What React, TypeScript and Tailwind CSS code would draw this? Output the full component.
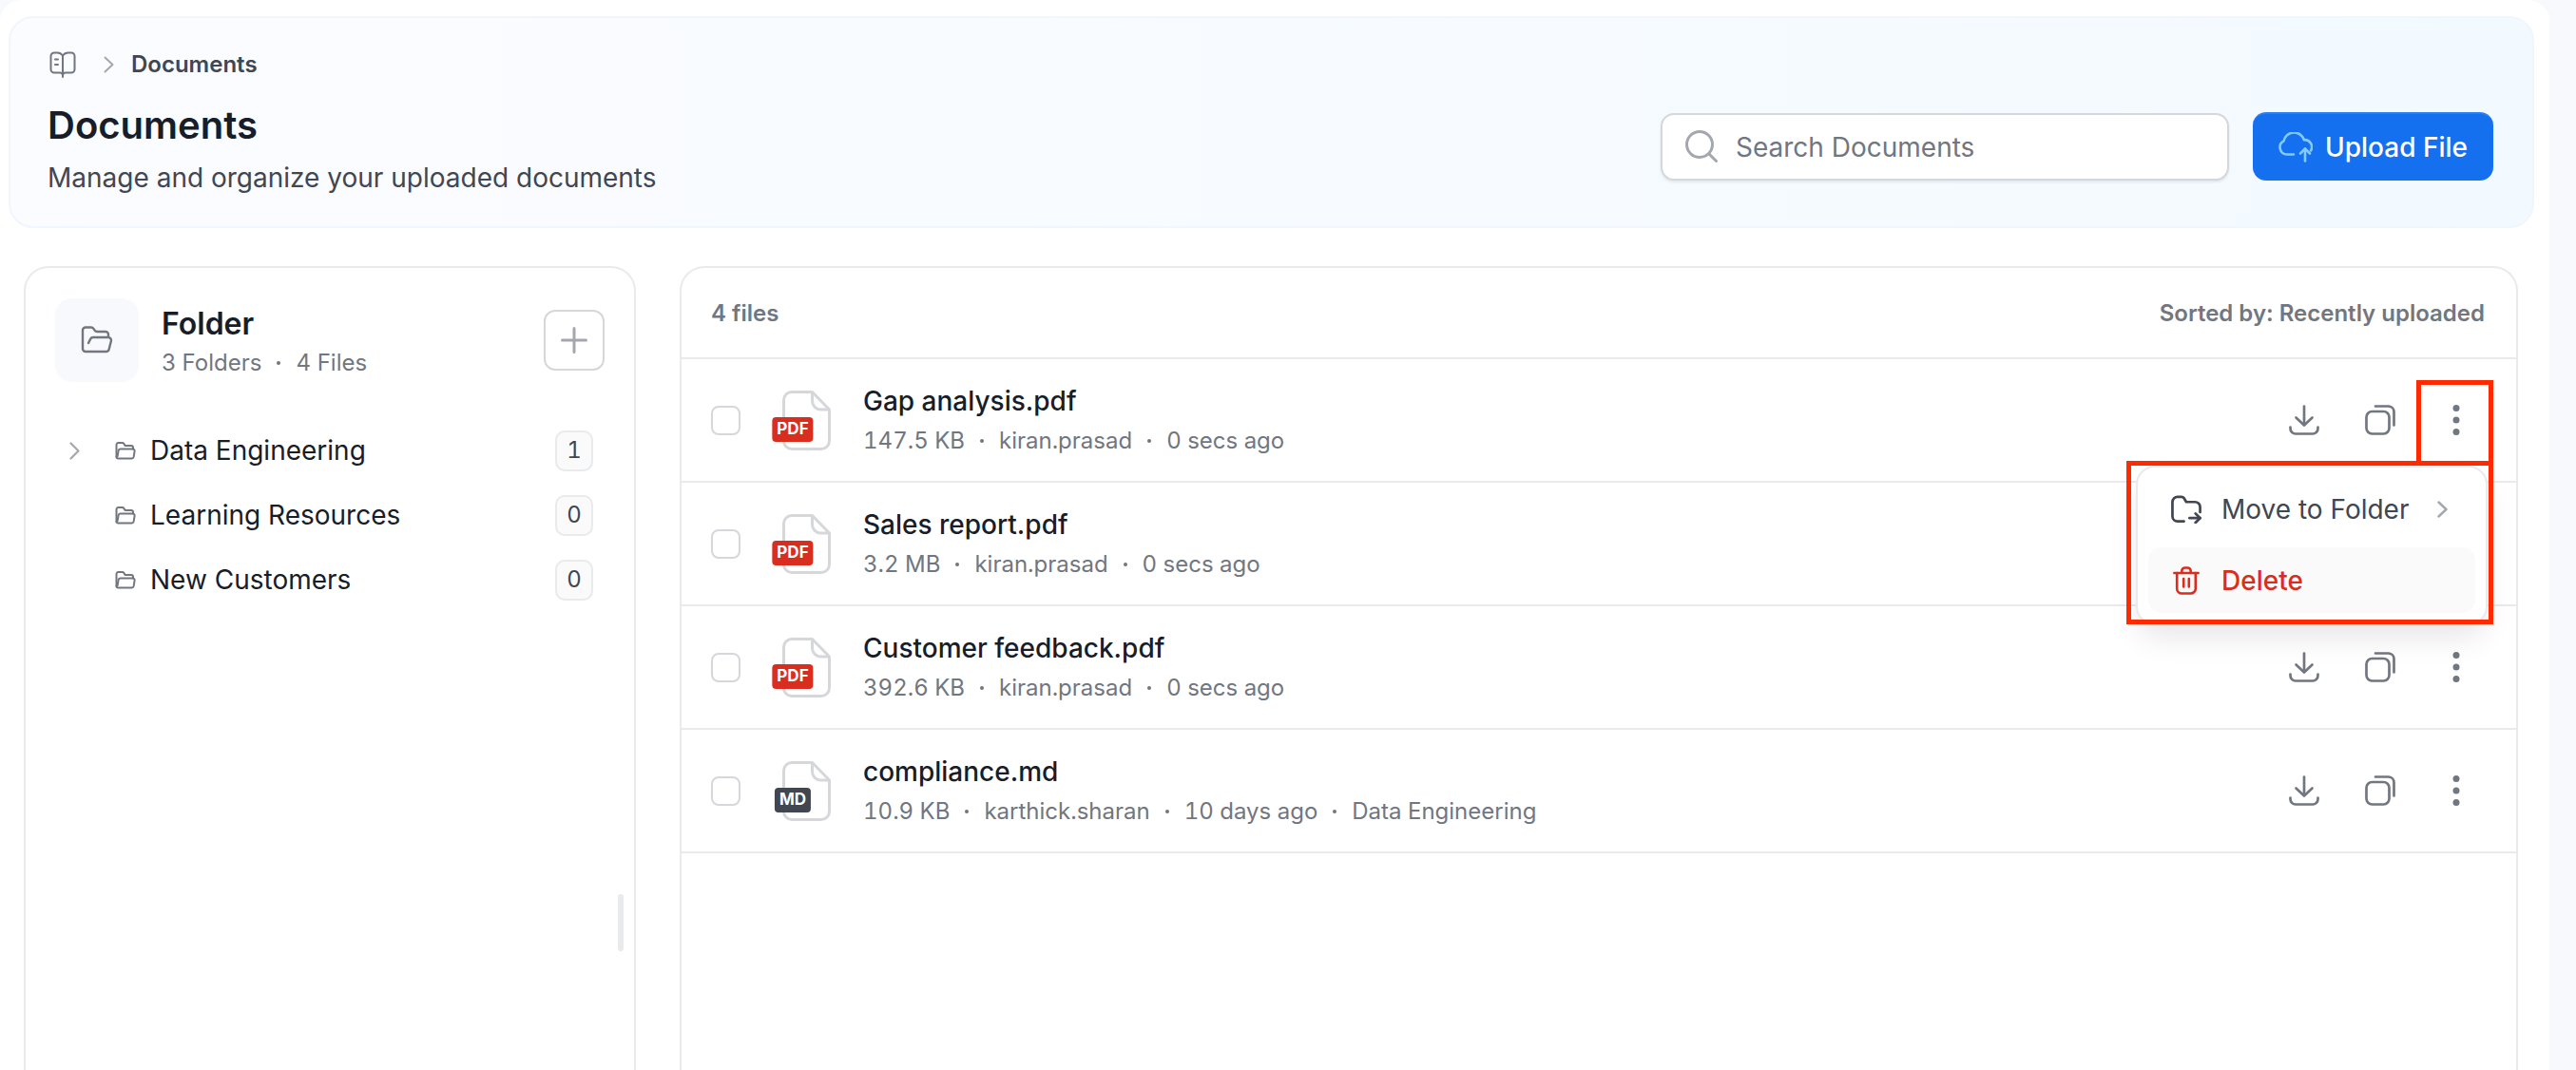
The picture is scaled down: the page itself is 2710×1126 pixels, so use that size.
import React from "react";

const Dot = () => <span className="w-[4px] h-[4px] rounded-full bg-[#717680] mx-[16px] shrink-0" />;

function FolderSmall({ cls }: { cls: string }) {
  return (
    <svg className={cls} viewBox="0 0 24 24" fill="none" stroke="currentColor" strokeWidth="2" strokeLinecap="round" strokeLinejoin="round">
      <path d="M2.500 19V6a2 2 0 0 1 2-2h4.200a2 2 0 0 1 1.600.800L11.600 7H18a2 2 0 0 1 2 2v1.500" />
      <path d="M2.500 19a1.800 1.800 0 0 0 1.800 1.500H18.600a2 2 0 0 0 2-1.600l1-6a2 2 0 0 0-2-2.400H6.600a2 2 0 0 0-2 1.700L3.600 18" />
    </svg>
  );
}

function FileIcon({ label, bg }: { label: string; bg: string }) {
  return (
    <div className="relative w-[61px] h-[63px] shrink-0 flex justify-end">
      <svg className="w-[51px] h-[63px]" viewBox="0 0 51 63" fill="none" stroke="#d5d7da" strokeWidth="3" strokeLinejoin="round">
        <path d="M10 1.500H31.500L49.500 20V53a8.500 8.500 0 0 1-8.500 8.500H10A8.500 8.500 0 0 1 1.500 53V10A8.500 8.500 0 0 1 10 1.500Z" />
        <path d="M31.500 1.500V11a9 9 0 0 0 9 9H49.500" />
      </svg>
      <span className={`absolute top-[28px] left-[21px] -translate-x-1/2 h-[26px] rounded-[4px] px-[5px] flex items-center text-white text-[17px] font-bold leading-none ${bg}`}>
        {label}
      </span>
    </div>
  );
}

function Row({ name, meta, label, bg }: { name: string; meta: string[]; label: string; bg: string }) {
  return (
    <div className="h-[130px] flex items-center pl-[31px] pr-[23px] border-b-2 border-[#e9eaeb]">
      <div className="w-[31px] h-[31px] rounded-[8px] border-2 border-[#d5d7da] bg-white shrink-0" />
      <div className="ml-[34px]">
        <FileIcon label={label} bg={bg} />
      </div>
      <div className="ml-[34px] mt-[2px] flex flex-col">
        <div className="text-[28px] leading-[41px] font-medium text-[#181d27]">{name}</div>
        <div className="flex items-center text-[24px] leading-[41px] text-[#717680] tabular-nums">
          {meta.map((m, i) => (
            <React.Fragment key={m}>
              {i > 0 && <Dot />}
              <span>{m}</span>
            </React.Fragment>
          ))}
        </div>
      </div>
      <div className="ml-auto flex items-center text-[#717680]">
        <button className="w-[80px] flex justify-center">
          <svg className="w-[32px] h-[32px]" viewBox="0 0 32 32" fill="none" stroke="currentColor" strokeWidth="2.700" strokeLinecap="round" strokeLinejoin="round">
            <path d="M16 1.500V21" />
            <path d="M7.500 13.500 16 21.500l8.500-8" />
            <path d="M1.500 23.500V25a5.500 5.500 0 0 0 5.500 5.500h18a5.500 5.500 0 0 0 5.500-5.500v-1.500" />
          </svg>
        </button>
        <button className="w-[80px] flex justify-center">
          <svg className="w-[32px] h-[32px]" viewBox="0 0 32 32" fill="none" stroke="currentColor" strokeWidth="2.700" strokeLinecap="round" strokeLinejoin="round">
            <rect x="1.500" y="7" width="24" height="23.500" rx="6" />
            <path d="M11 1.500h14a6 6 0 0 1 5.500 6V21.500" />
          </svg>
        </button>
        <button className="w-[80px] flex justify-center">
          <svg className="w-[8px] h-[32px]" viewBox="0 0 8 32" fill="currentColor">
            <circle cx="4" cy="3.500" r="3.500" />
            <circle cx="4" cy="16" r="3.500" />
            <circle cx="4" cy="28.500" r="3.500" />
          </svg>
        </button>
      </div>
    </div>
  );
}

function FolderRow({ name, count, chevron }: { name: string; count: number; chevron?: boolean }) {
  return (
    <div className="h-[68px] flex items-center">
      <div className="w-[62px] pl-[15px] shrink-0 flex items-center">
        {chevron && (
          <svg className="w-[11px] h-[19px] text-[#a4a7ae]" viewBox="0 0 11 19" fill="none" stroke="currentColor" strokeWidth="2.200" strokeLinecap="round" strokeLinejoin="round">
            <path d="M1.500 1.500 9.500 9.500l-8 8" />
          </svg>
        )}
      </div>
      <FolderSmall cls="w-[24px] h-[24px] text-[#717680] shrink-0" />
      <span className="ml-[14px] text-[28px] text-[#181d27]">{name}</span>
      <span className="ml-auto mr-[12px] w-[40px] h-[43px] rounded-[10px] border-2 border-[#e9eaeb] bg-[#fafafa] flex items-center justify-center text-[24px] text-[#414651] tabular-nums">
        {count}
      </span>
    </div>
  );
}

export default function App() {
  return (
    <div className="w-[2710px] h-[1126px] overflow-hidden flex bg-[#f8f9fc] font-['Inter','Noto_Sans',sans-serif]">
      <main className="w-[2682px] h-[1126px] shrink-0 bg-white rounded-t-[22px] flex flex-col pt-[17px] pl-[9px] pr-[16px]">
        <header className="h-[223px] shrink-0 rounded-[26px] border-2 border-[#eff6fd] bg-gradient-to-r from-[#fbfcff] to-[#f3faff] pl-[39px] pr-[41px] pt-[34px] flex items-start justify-between">
          <div className="flex flex-col">
            <div className="flex items-center h-[30px] pl-[2px]">
              <svg className="w-[28px] h-[28px] text-[#717680]" viewBox="0 0 28 28" fill="none" stroke="currentColor" strokeWidth="2" strokeLinecap="round" strokeLinejoin="round">
                <path d="M14 4.500C12.500 2.500 11 1.500 8.500 1.500H5A3.500 3.500 0 0 0 1.500 5V19a3.500 3.500 0 0 0 3.500 3.500h6A3 3 0 0 1 14 25.500a3 3 0 0 1 3-3h6a3.500 3.500 0 0 0 3.500-3.500V5A3.500 3.500 0 0 0 23 1.500H19.500C17 1.500 15.500 2.500 14 4.500Z" />
                <path d="M14 4.500V27" />
                <path d="M6 8.500h3M6 14h3" />
              </svg>
              <svg className="ml-[29px] w-[11px] h-[18px] text-[#a4a7ae]" viewBox="0 0 11 18" fill="none" stroke="currentColor" strokeWidth="2" strokeLinecap="round" strokeLinejoin="round">
                <path d="M1.500 1.500 9.500 9l-8 7.500" />
              </svg>
              <span className="ml-[18px] text-[24px] font-semibold text-[#414651]">Documents</span>
            </div>
            <h1 className="mt-[26px] text-[40px] leading-[46px] font-semibold text-[#181d27]">Documents</h1>
            <p className="mt-[12px] text-[28px] leading-[40px] text-[#414651]">Manage and organize your uploaded documents</p>
          </div>
          <div className="flex items-center gap-[25px] mt-[65px]">
            <div className="w-[598px] h-[71px] rounded-[14px] bg-white border-2 border-[#d5d7da] shadow-[0_2px_3px_rgba(10,13,18,0.08)] flex items-center pl-[24px]">
              <svg className="w-[34px] h-[34px] text-[#a4a7ae]" viewBox="0 0 34 34" fill="none" stroke="currentColor" strokeWidth="3" strokeLinecap="round">
                <circle cx="15" cy="15" r="13.500" />
                <path d="M25 25l7.500 7.500" />
              </svg>
              <span className="ml-[19px] mt-[2px] text-[28px] text-[#717680]">Search Documents</span>
            </div>
            <button className="w-[253px] h-[72px] rounded-[14px] bg-[#1570ef] border-t-2 border-[#2a7ff5] flex items-center justify-center text-white text-[28px] font-medium">
              <svg className="w-[36px] h-[32px] text-[#84caff]" viewBox="0 0 36 32" fill="none" stroke="currentColor" strokeWidth="2.600" strokeLinecap="round" strokeLinejoin="round">
                <path d="M16 23.500H9A7.500 7.500 0 0 1 5.500 9.400 11 11 0 0 1 26.800 8.200 7.500 7.500 0 0 1 34 19.500" />
                <path d="M28 30.500V17.500" />
                <path d="M23 22.500l5-5 5 5" />
              </svg>
              <span className="ml-[13px]">Upload File</span>
            </button>
          </div>
        </header>

        <div className="flex-1 flex mt-[40px] pl-[16px] pr-[17px] gap-[46px] min-h-0">
          <aside className="relative w-[644px] shrink-0 rounded-t-[26px] border-2 border-b-0 border-[#e9eaeb] bg-white px-[31px] pt-[32px]">
            <div className="flex items-center">
              <div className="w-[88px] h-[88px] rounded-[18px] bg-[#f8f9fc] flex items-center justify-center text-[#717680]">
                <svg className="w-[36px] h-[36px]" viewBox="0 0 24 24" fill="none" stroke="currentColor" strokeWidth="1.600" strokeLinecap="round" strokeLinejoin="round">
                  <path d="m6 14 1.500-2.900A2 2 0 0 1 9.240 10H20a2 2 0 0 1 1.940 2.500l-1.540 6a2 2 0 0 1-1.950 1.500H4a2 2 0 0 1-2-2V5a2 2 0 0 1 2-2h3.900a2 2 0 0 1 1.690.900l.810 1.200a2 2 0 0 0 1.670.900H18a2 2 0 0 1 2 2v2" />
                </svg>
              </div>
              <div className="ml-[24px] flex flex-col">
                <div className="mt-[2px] text-[32px] leading-[40px] font-semibold text-[#181d27]">Folder</div>
                <div className="mt-[5px] flex items-center text-[24px] leading-[32px] text-[#717680]">
                  <span>3 Folders</span>
                  <span className="w-[4px] h-[4px] rounded-full bg-[#717680] mx-[16px]" />
                  <span>4 Files</span>
                </div>
              </div>
              <button className="ml-auto w-[64px] h-[64px] rounded-[12px] border-2 border-[#d5d7da] flex items-center justify-center text-[#a4a7ae]">
                <svg className="w-[28px] h-[28px]" viewBox="0 0 28 28" fill="none" stroke="currentColor" strokeWidth="3" strokeLinecap="round">
                  <path d="M14 1.500v25M1.500 14h25" />
                </svg>
              </button>
            </div>
            <div className="mt-[38px] flex flex-col">
              <FolderRow name="Data Engineering" count={1} chevron />
              <FolderRow name="Learning Resources" count={0} />
              <FolderRow name="New Customers" count={0} />
            </div>
            <div className="absolute left-[623px] top-[659px] w-[6px] h-[60px] rounded-full bg-[#e9eaeb]" />
          </aside>

          <section className="relative flex-1 rounded-t-[26px] border-2 border-b-0 border-[#e9eaeb] bg-white">
            <div className="h-[96px] pt-[2px] border-b-2 border-[#e9eaeb] flex items-center justify-between pl-[31px] pr-[33px]">
              <span className="text-[24px] font-semibold text-[#717680]">4 files</span>
              <span className="text-[24px] font-semibold text-[#717680]">Sorted by: Recently uploaded</span>
            </div>
            <Row name="Gap analysis.pdf" label="PDF" bg="bg-[#d92d20]" meta={["147.5 KB", "kiran.prasad", "0 secs ago"]} />
            <Row name="Sales report.pdf" label="PDF" bg="bg-[#d92d20]" meta={["3.2 MB", "kiran.prasad", "0 secs ago"]} />
            <Row name="Customer feedback.pdf" label="PDF" bg="bg-[#d92d20]" meta={["392.6 KB", "kiran.prasad", "0 secs ago"]} />
            <Row name="compliance.md" label="MD" bg="bg-[#414651]" meta={["10.9 KB", "karthick.sharan", "10 days ago", "Data Engineering"]} />

            <div className="absolute left-[1530px] top-[208px] w-[370px] h-[168px] rounded-[20px] border-2 border-[#e9eaeb] bg-white shadow-[0_16px_32px_-4px_rgba(10,13,18,0.10)] p-[11px] flex flex-col">
              <div className="h-[64px] mt-[1px] shrink-0 flex items-center pl-[24px]">
                <svg className="w-[32px] h-[30px] text-[#414651] shrink-0" viewBox="0 0 33 30" fill="none" stroke="currentColor" strokeWidth="2.800" strokeLinecap="round" strokeLinejoin="round">
                  <path d="M14 28H7a5.500 5.500 0 0 1-5.500-5.500V7A5.500 5.500 0 0 1 7 1.500h4.500a3 3 0 0 1 2.400 1.200L16.500 7H26a5.500 5.500 0 0 1 5.500 5.500V18" />
                  <path d="M20 24.500h11.500" />
                  <path d="M26.500 19.500l5 5-5 5" />
                </svg>
                <span className="ml-[21px] text-[28px] text-[#414651]">Move to Folder</span>
                <svg className="ml-[30px] w-[11px] h-[18px] text-[#a4a7ae]" viewBox="0 0 11 18" fill="none" stroke="currentColor" strokeWidth="2.400" strokeLinecap="round" strokeLinejoin="round">
                  <path d="M1.500 1.500 9.500 9l-8 7.500" />
                </svg>
              </div>
              <div className="h-[72px] mt-[8px] rounded-[14px] bg-[#fafafa] flex items-center pl-[26px]">
                <svg className="w-[28px] h-[30px] text-[#d92d20] shrink-0" viewBox="0 0 30 32" fill="none" stroke="currentColor" strokeWidth="2.800" strokeLinecap="round" strokeLinejoin="round">
                  <path d="M1.500 7.500h27" />
                  <path d="M10 7.500V5a3.500 3.500 0 0 1 3.500-3.500h3A3.500 3.500 0 0 1 20 5v2.500" />
                  <path d="M4.500 7.500V25a5.500 5.500 0 0 0 5.500 5.500h10a5.500 5.500 0 0 0 5.500-5.500V7.500" />
                  <path d="M12 14v9M18 14v9" />
                </svg>
                <span className="ml-[23px] text-[28px] font-medium text-[#d92d20]">Delete</span>
              </div>
            </div>

            <div className="absolute left-[1825px] top-[118px] w-[81px] h-[90px] border-[5px] border-[#ff2a00] pointer-events-none" />
            <div className="absolute left-[1520px] top-[203px] w-[386px] h-[172px] border-[5px] border-[#ff2a00] pointer-events-none" />
          </section>
        </div>
      </main>
    </div>
  );
}
